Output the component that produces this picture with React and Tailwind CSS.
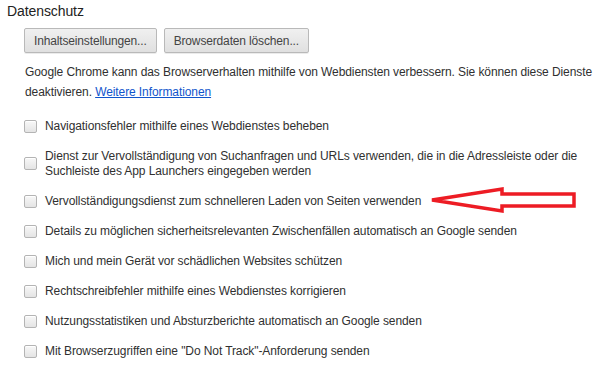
// App.jsx
const options = [
  "Navigationsfehler mithilfe eines Webdienstes beheben",
  "Dienst zur Vervollständigung von Suchanfragen und URLs verwenden, die in die Adressleiste oder die Suchleiste des App Launchers eingegeben werden",
  "Vervollständigungsdienst zum schnelleren Laden von Seiten verwenden",
  "Details zu möglichen sicherheitsrelevanten Zwischenfällen automatisch an Google senden",
  "Mich und mein Gerät vor schädlichen Websites schützen",
  "Rechtschreibfehler mithilfe eines Webdienstes korrigieren",
  "Nutzungsstatistiken und Absturzberichte automatisch an Google senden",
  'Mit Browserzugriffen eine "Do Not Track"-Anforderung senden',
];

function Checkbox() {
  return (
    <span className="shrink-0 w-[13px] h-[13px] rounded-[2px] border border-[#b4b4b4] bg-gradient-to-b from-[#f8f8f8] to-[#e4e4e4] shadow-[inset_0_1px_0_#fff]" />
  );
}

function Button({ children }) {
  return (
    <button className="h-[25px] px-[9px] rounded-[2px] border border-[#b9b9b9] bg-gradient-to-b from-[#f0f0f0] to-[#e0e0e0] text-[#444] text-[12px] leading-none tracking-[-0.15px] shadow-[0_1px_0_rgba(0,0,0,0.08)]">
      {children}
    </button>
  );
}

export default function App() {
  return (
    <div className="relative w-[603px] h-[372px] overflow-hidden bg-white text-[#303030] text-[12px] tracking-[-0.09px] font-['Liberation_Sans',sans-serif]">
      <h3 className="pl-[7px] pt-[1px] text-[14px] leading-[20px] text-[#222]">Datenschutz</h3>

      <div className="pl-[24px] pr-[6px]">
        <div className="flex gap-[7px] mt-[7px]">
          <Button>Inhaltseinstellungen...</Button>
          <Button>Browserdaten löschen...</Button>
        </div>

        <p className="mt-[9px] leading-[20px] pl-[1px]">
          Google Chrome kann das Browserverhalten mithilfe von Webdiensten verbessern. Sie können diese Dienste
          deaktivieren.{" "}
          <a href="#" className="text-[#1155cc] underline">Weitere Informationen</a>
        </p>

        <ul className="mt-[9px]">
          {options.map((text) => (
            <li key={text} className="flex items-center gap-[8px] py-[7.5px]">
              <Checkbox />
              <span className="leading-[15px] pr-[6px]">{text}</span>
            </li>
          ))}
        </ul>
      </div>

      <svg className="absolute left-0 top-0 pointer-events-none" width="603" height="372">
        <polygon
          points="432,200 502,189 502,194 574,194 574,206 502,206 502,211"
          fill="none"
          stroke="#ed1c24"
          strokeWidth="3.5"
          strokeLinejoin="miter"
        />
      </svg>
    </div>
  );
}
